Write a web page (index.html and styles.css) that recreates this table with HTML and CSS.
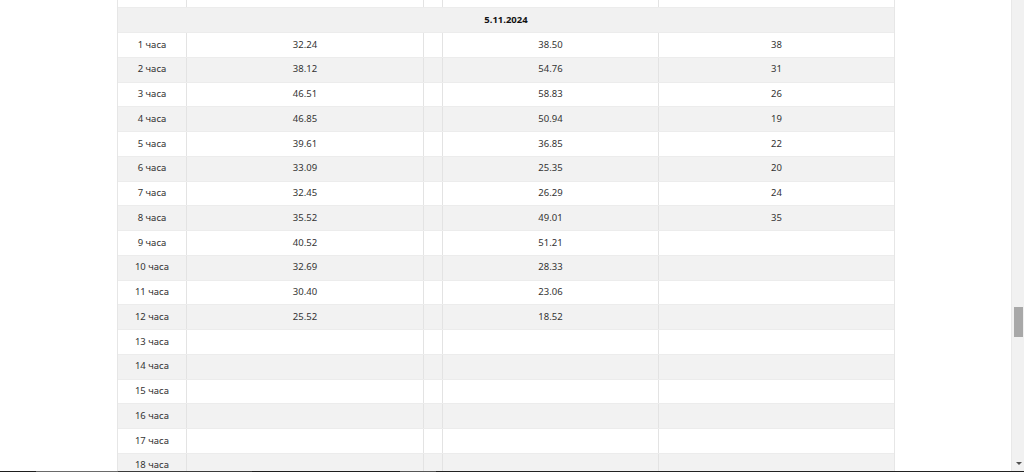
FILE: index.html
```html
<!DOCTYPE html>
<html lang="ru">
<head>
<meta charset="utf-8">
<title>Таблица</title>
<link rel="stylesheet" href="styles.css">
</head>
<body>
<div class="page">
  <div class="table">
    <div class="row top"><div></div><div></div><div></div><div></div><div></div></div>
    <div class="row date"><div class="span">5.11.2024</div></div>
    <div class="row"><div>1 часа</div><div>32.24</div><div></div><div>38.50</div><div>38</div></div>
    <div class="row alt"><div>2 часа</div><div>38.12</div><div></div><div>54.76</div><div>31</div></div>
    <div class="row"><div>3 часа</div><div>46.51</div><div></div><div>58.83</div><div>26</div></div>
    <div class="row alt"><div>4 часа</div><div>46.85</div><div></div><div>50.94</div><div>19</div></div>
    <div class="row"><div>5 часа</div><div>39.61</div><div></div><div>36.85</div><div>22</div></div>
    <div class="row alt"><div>6 часа</div><div>33.09</div><div></div><div>25.35</div><div>20</div></div>
    <div class="row"><div>7 часа</div><div>32.45</div><div></div><div>26.29</div><div>24</div></div>
    <div class="row alt"><div>8 часа</div><div>35.52</div><div></div><div>49.01</div><div>35</div></div>
    <div class="row"><div>9 часа</div><div>40.52</div><div></div><div>51.21</div><div></div></div>
    <div class="row alt"><div>10 часа</div><div>32.69</div><div></div><div>28.33</div><div></div></div>
    <div class="row"><div>11 часа</div><div>30.40</div><div></div><div>23.06</div><div></div></div>
    <div class="row alt"><div>12 часа</div><div>25.52</div><div></div><div>18.52</div><div></div></div>
    <div class="row"><div>13 часа</div><div></div><div></div><div></div><div></div></div>
    <div class="row alt"><div>14 часа</div><div></div><div></div><div></div><div></div></div>
    <div class="row"><div>15 часа</div><div></div><div></div><div></div><div></div></div>
    <div class="row alt"><div>16 часа</div><div></div><div></div><div></div><div></div></div>
    <div class="row"><div>17 часа</div><div></div><div></div><div></div><div></div></div>
    <div class="row alt"><div>18 часа</div><div></div><div></div><div></div><div></div></div>
  </div>
</div>
<div class="scrollbar"><div class="thumb"></div><div class="arrow"></div></div>
<div class="bottombar"></div>
</body>
</html>
```
FILE: styles.css
```css
html, body {
  margin: 0;
  padding: 0;
  background: #fff;
  overflow: hidden;
}
body {
  font-family: "Noto Sans", "Open Sans", sans-serif;
  font-size: 9.5px;
  color: #333;
  width: 1024px;
  height: 472px;
}
.page {
  height: 472px;
  overflow: hidden;
  padding-left: 117px;
}
.table {
  width: 778px;
  border-left: 1px solid #e6e6e6;
  border-right: 1px solid #e6e6e6;
  box-sizing: border-box;
}
.row {
  display: grid;
  grid-template-columns: 68px 237px 19px 216px 1fr;
  height: 24.75px;
  box-sizing: border-box;
  border-top: 1px solid #ececec;
  background: #fff;
}
.row.alt {
  background: #f2f2f2;
}
.row > div {
  display: flex;
  align-items: center;
  justify-content: center;
  border-left: 1px solid #e3e3e3;
  line-height: 1;
  padding-bottom: 1px;
}
.row > div:first-child {
  border-left: none;
}
.row.top {
  height: 7px;
  border-top: none;
}
.row.date {
  display: flex;
  height: 25px;
  background: #f1f1f1;
}
.row.date .span {
  flex: 1;
  font-weight: 700;
  color: #111;
  border-left: none;
}
.scrollbar {
  position: fixed;
  top: 0;
  right: 0;
  width: 12px;
  height: 472px;
  background: #f1f1f1;
  border-left: 1px solid #e8e8e8;
}
.thumb {
  position: absolute;
  left: 2px;
  top: 307px;
  width: 9px;
  height: 30px;
  background: #a8a8a8;
}
.arrow {
  position: absolute;
  left: 4px;
  top: 462px;
  width: 0;
  height: 0;
  border-left: 3px solid transparent;
  border-right: 3px solid transparent;
  border-top: 3px solid #505050;
}
.bottombar {
  position: fixed;
  left: 0;
  bottom: 0;
  width: 1024px;
  height: 1px;
  background: linear-gradient(to right, #1e1e1e 0, #1e1e1e 36px, #6a6a6a 36px, #6a6a6a 118px, #3a3a3a 118px, #3a3a3a 252px, #1e1e1e 252px, #1e1e1e 400px, #555 400px, #555 436px, #222 436px, #222 100%);
}
```
